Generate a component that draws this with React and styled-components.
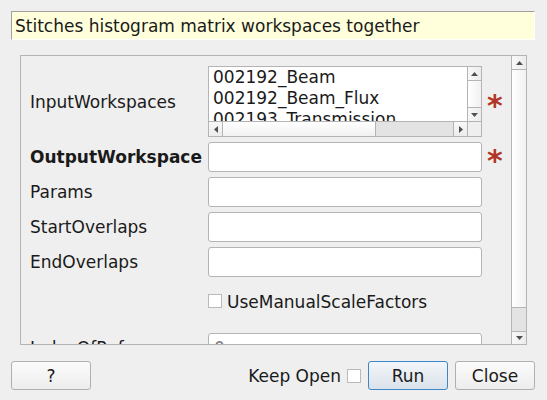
import React from "react";
import styled, { createGlobalStyle } from "styled-components";

const Global = createGlobalStyle`
  html, body { margin: 0; padding: 0; background: #efefef; }
  body { font-family: "DejaVu Sans", "Liberation Sans", sans-serif; font-size: 17px; color: #1a1a1a; }
  * { box-sizing: border-box; }
`;

const Dialog = styled.div`
  width: 547px;
  height: 400px;
  padding: 11px 12px 0 11px;
  display: flex;
  flex-direction: column;
`;

const Description = styled.div`
  height: 29px;
  background: #ffffdc;
  border-top: 1px solid #a0a0a0;
  border-left: 1px solid #a0a0a0;
  border-right: 1px solid #ffffff;
  border-bottom: 1px solid #ffffff;
  padding: 0 3px;
  display: flex;
  align-items: center;
  white-space: nowrap;
`;

const ScrollFrame = styled.div`
  margin: 15px 8px 0 9px;
  height: 290px;
  border: 1px solid #b4b4b4;
  display: flex;
`;

const Viewport = styled.div`
  flex: 1;
  overflow: hidden;
  padding: 10px 0 0 10px;
`;

const VScroll = styled.div`
  width: 15px;
  border-left: 1px solid #b4b4b4;
  display: flex;
  flex-direction: column;
`;

const ArrowBtn = styled.div`
  height: ${(p) => p.$h || 14}px;
  flex: none;
  display: flex;
  align-items: center;
  justify-content: center;
  background: linear-gradient(90deg, #f8f8f8, #ececec);
  border-top: ${(p) => (p.$top ? "1px solid #b4b4b4" : "none")};
  border-bottom: ${(p) => (p.$bottom ? "1px solid #b4b4b4" : "none")};
`;

const HArrowBtn = styled.div`
  width: 14px;
  flex: none;
  display: flex;
  align-items: center;
  justify-content: center;
  background: linear-gradient(180deg, #f8f8f8, #ececec);
  border-left: ${(p) => (p.$left ? "1px solid #b4b4b4" : "none")};
  border-right: ${(p) => (p.$right ? "1px solid #b4b4b4" : "none")};
`;

const Track = styled.div`
  flex: ${(p) => p.$flex || 1};
  background: ${(p) =>
    p.$v
      ? "linear-gradient(90deg, #ffffff, #f1f1f1)"
      : "linear-gradient(180deg, #ffffff, #f1f1f1)"};
`;

const Thumb = styled.div`
  flex: none;
  ${(p) => (p.$v ? `height: ${p.$size}px;` : `width: ${p.$size}px;`)}
  background: #e3e3e3;
  border-${(p) => (p.$v ? "top" : "left")}: 1px solid #b4b4b4;
`;

const Form = styled.div`
  display: grid;
  grid-template-columns: 177px 274px 24px;
  row-gap: 5px;
  align-items: center;
`;

const Label = styled.div`
  font-weight: ${(p) => (p.$bold ? "bold" : "normal")};
  white-space: nowrap;
  margin-left: -1px;
`;

const Input = styled.div`
  height: 30px;
  background: #ffffff;
  border: 1px solid #b4b4b4;
  border-radius: 3px;
  padding: 0 5px;
  display: flex;
  align-items: center;
  color: #777;
`;

const ListBox = styled.div`
  height: 71px;
  border: 1px solid #b4b4b4;
  background: #fff;
  display: grid;
  grid-template-columns: 1fr 14px;
  grid-template-rows: 1fr 15px;
`;

const ListItems = styled.div`
  overflow: hidden;
  padding: 0 0 0 4px;
  line-height: 21px;
  white-space: nowrap;
`;

const ListV = styled.div`
  border-left: 1px solid #b4b4b4;
  display: flex;
  flex-direction: column;
`;

const ListH = styled.div`
  border-top: 1px solid #b4b4b4;
  display: flex;
`;

const Corner = styled.div`
  border-top: 1px solid #b4b4b4;
  border-left: 1px solid #b4b4b4;
  background: #efefef;
`;

const Star = styled.div`
  color: #b03526;
  font-weight: bold;
  font-size: 30px;
  line-height: 20px;
  height: 14px;
  padding: 1px 0 0 5px;
  overflow: visible;
`;

const CheckRow = styled.label`
  grid-column: 2 / 4;
  height: 46px;
  display: flex;
  align-items: flex-start;
  gap: 5px;
  padding-top: 10px;
  white-space: nowrap;
`;

const Box = styled.span`
  width: 14px;
  height: 14px;
  flex: none;
  background: #fff;
  border: 1px solid #b9b9b9;
  margin-top: ${(p) => p.$mt || 0}px;
`;

const Footer = styled.div`
  margin-top: 16px;
  display: flex;
  align-items: center;
`;

const Button = styled.button`
  font: inherit;
  color: #1a1a1a;
  width: 80px;
  height: 29px;
  border-radius: 3px;
  border: 1px solid ${(p) => (p.$primary ? "#3b87c9" : "#b0b0b0")};
  background: ${(p) =>
    p.$primary
      ? "linear-gradient(180deg, #f3f6f9, #dae2ea)"
      : "linear-gradient(180deg, #fbfbfb, #ededed)"};
  padding: 0;
`;

const Spacer = styled.div`
  flex: 1;
`;

const KeepOpen = styled.label`
  display: flex;
  align-items: center;
  gap: 6px;
  margin-right: 7px;
`;

const RightButtons = styled.div`
  display: flex;
  gap: 7px;
`;

const Tri = ({ dir }) => {
  const pts = {
    up: "0,4 7,4 3.5,0",
    down: "0,0 7,0 3.5,4",
    left: "4,0 4,7 0,3.5",
    right: "0,0 0,7 4,3.5",
  }[dir];
  const vertical = dir === "up" || dir === "down";
  return (
    <svg width={vertical ? 7 : 4} height={vertical ? 4 : 7}>
      <polygon points={pts} fill="#505050" />
    </svg>
  );
};

const Field = ({ label, bold, star }) => (
  <>
    <Label $bold={bold}>{label}</Label>
    <Input />
    {star ? <Star>*</Star> : <span />}
  </>
);

export default function App() {
  return (
    <>
      <Global />
      <Dialog>
        <Description>Stitches histogram matrix workspaces together</Description>
        <ScrollFrame>
          <Viewport>
            <Form>
              <Label>InputWorkspaces</Label>
              <ListBox>
                <ListItems>
                  <div>002192_Beam</div>
                  <div>002192_Beam_Flux</div>
                  <div>002193_Transmission</div>
                </ListItems>
                <ListV>
                  <ArrowBtn $bottom><Tri dir="up" /></ArrowBtn>
                  <Track $v />
                  <ArrowBtn $top><Tri dir="down" /></ArrowBtn>
                </ListV>
                <ListH>
                  <HArrowBtn $right><Tri dir="left" /></HArrowBtn>
                  <Track />
                  <Thumb $size={78} />
                  <HArrowBtn $left><Tri dir="right" /></HArrowBtn>
                </ListH>
                <Corner />
              </ListBox>
              <Star>*</Star>
              <Field label="OutputWorkspace" bold star />
              <Field label="Params" />
              <Field label="StartOverlaps" />
              <Field label="EndOverlaps" />
              <span />
              <CheckRow>
                <Box $mt={2} />
                UseManualScaleFactors
              </CheckRow>
              <Label>IndexOfReference</Label>
              <Input>0</Input>
              <span />
            </Form>
          </Viewport>
          <VScroll>
            <ArrowBtn $bottom><Tri dir="up" /></ArrowBtn>
            <Track $v />
            <Thumb $v $size={24} />
            <ArrowBtn $top $h={13}><Tri dir="down" /></ArrowBtn>
          </VScroll>
        </ScrollFrame>
        <Footer>
          <Button>?</Button>
          <Spacer />
          <KeepOpen>
            Keep Open
            <Box />
          </KeepOpen>
          <RightButtons>
            <Button $primary>Run</Button>
            <Button>Close</Button>
          </RightButtons>
        </Footer>
      </Dialog>
    </>
  );
}
